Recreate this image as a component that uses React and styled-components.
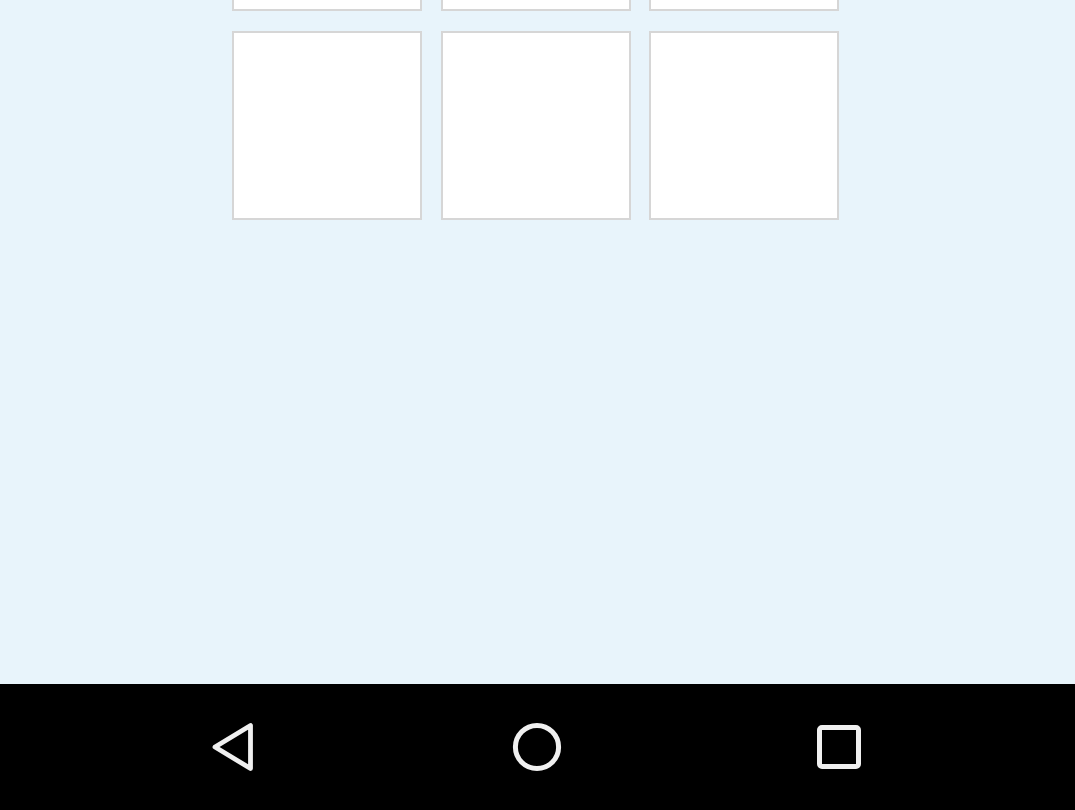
import React, { useLayoutEffect, useRef } from "react";
import styled, { createGlobalStyle } from "styled-components";

const GlobalStyle = createGlobalStyle`
  html, body {
    margin: 0;
    padding: 0;
    height: 100%;
    overflow: hidden;
    font-family: "Roboto", "Liberation Sans", sans-serif;
  }
  #root {
    height: 100%;
  }
`;

const Screen = styled.div`
  display: flex;
  flex-direction: column;
  width: 100%;
  height: 810px;
  background: #e8f4fb;
`;

const ScrollArea = styled.div`
  flex: 1;
  overflow-y: auto;
  scrollbar-width: none;

  &::-webkit-scrollbar {
    display: none;
  }
`;

const TileGrid = styled.div`
  display: grid;
  grid-template-columns: repeat(3, 190px);
  grid-auto-rows: 189px;
  column-gap: 18.5px;
  row-gap: 20px;
  padding: 20px 0 700px 232px;
`;

const Tile = styled.div`
  box-sizing: border-box;
  background: #ffffff;
  border: 2px solid #d6d6d6;
`;

const NavBar = styled.nav`
  flex: 0 0 126px;
  display: flex;
  align-items: center;
  justify-content: center;
  background: #000000;
`;

const NavButton = styled.button`
  width: 304px;
  height: 100%;
  display: flex;
  align-items: center;
  justify-content: center;
  background: transparent;
  border: none;
  padding: 0;
  cursor: pointer;
  transform: translateX(${(props) => props.$shift || 0}px);
`;

const iconStroke = "#f0f0f0";

const BackIcon = () => (
  <svg width="50" height="50" viewBox="0 0 50 50">
    <polygon
      points="7,25 42.5,3.5 42.5,46.5"
      fill="none"
      stroke={iconStroke}
      strokeWidth="4.8"
      strokeLinejoin="round"
    />
  </svg>
);

const HomeIcon = () => (
  <svg width="50" height="50" viewBox="0 0 50 50">
    <circle cx="25" cy="25" r="21.6" fill="none" stroke={iconStroke} strokeWidth="5" />
  </svg>
);

const RecentsIcon = () => (
  <svg width="50" height="50" viewBox="0 0 50 50">
    <rect
      x="5.5"
      y="5.5"
      width="39"
      height="39"
      rx="2.5"
      fill="none"
      stroke={iconStroke}
      strokeWidth="5"
    />
  </svg>
);

const App = () => {
  const scrollRef = useRef(null);

  // the reference shows the list scrolled past the first row
  useLayoutEffect(() => {
    if (scrollRef.current) scrollRef.current.scrollTop = 198;
  }, []);

  const tiles = Array.from({ length: 6 });

  return (
    <>
      <GlobalStyle />
      <Screen>
        <ScrollArea ref={scrollRef}>
          <TileGrid>
            {tiles.map((_, index) => (
              <Tile key={index} />
            ))}
          </TileGrid>
        </ScrollArea>
        <NavBar>
          <NavButton aria-label="Back" $shift={-1}>
            <BackIcon />
          </NavButton>
          <NavButton aria-label="Home" $shift={-1}>
            <HomeIcon />
          </NavButton>
          <NavButton aria-label="Recents" $shift={-3}>
            <RecentsIcon />
          </NavButton>
        </NavBar>
      </Screen>
    </>
  );
};

export default App;
